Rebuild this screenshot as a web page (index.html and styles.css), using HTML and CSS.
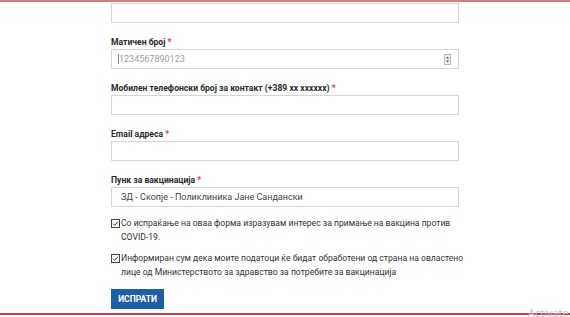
FILE: index.html
```html
<!DOCTYPE html>
<html lang="mk">
<head>
<meta charset="utf-8">
<link rel="stylesheet" href="styles.css">
</head>
<body>
<div class="topline"></div>
<form class="form">
  <div class="input"></div>
  <div class="field">
    <div class="label">Матичен број <span class="req">*</span></div>
    <div class="input number">
      <span class="caret"></span><span class="ph">1234567890123</span>
      <span class="spin">
        <svg width="7" height="11" viewBox="0 0 7 11"><rect x="0.5" y="0.5" width="6" height="10" fill="#eee" stroke="#bbb"/><path d="M2 4.5 L3.5 2.5 L5 4.5Z M2 6.5 L3.5 8.5 L5 6.5Z" fill="#555"/></svg>
      </span>
    </div>
  </div>
  <div class="field">
    <div class="label">Мобилен телефонски број за контакт (+389 xx xxxxxx) <span class="req">*</span></div>
    <div class="input"></div>
  </div>
  <div class="field">
    <div class="label">Email адреса <span class="req">*</span></div>
    <div class="input"></div>
  </div>
  <div class="field">
    <div class="label">Пунк за вакцинација <span class="req">*</span></div>
    <div class="input select">ЗД - Скопје - Поликлиника Јане Сандански</div>
  </div>
  <div class="check first">
    <span class="box"><svg width="9" height="9" viewBox="0 0 9 9"><rect x="0.5" y="0.5" width="8" height="8" fill="#fff" stroke="#444"/><path d="M2 4.6 L3.7 6.3 L7 2.6" fill="none" stroke="#333" stroke-width="1"/></svg></span>
    <span class="ctext">Со испраќање на оваа форма изразувам интерес за примање на вакцина против<br>COVID-19.</span>
  </div>
  <div class="check second">
    <span class="box"><svg width="9" height="9" viewBox="0 0 9 9"><rect x="0.5" y="0.5" width="8" height="8" fill="#fff" stroke="#444"/><path d="M2 4.6 L3.7 6.3 L7 2.6" fill="none" stroke="#333" stroke-width="1"/></svg></span>
    <span class="ctext">Информиран сум дека моите податоци ќе бидат обработени од страна на овластено<br>лице од Министерството за здравство за потребите за вакцинација</span>
  </div>
  <div class="btnrow"><span class="btn">ИСПРАТИ</span></div>
</form>
<div class="bottomline"></div>
<div class="watermark">Activate</div>
</body>
</html>
```
FILE: styles.css
```css
html, body {
  margin: 0;
  padding: 0;
  background: #fff;
  overflow: hidden;
}
body {
  width: 570px;
  height: 317px;
  position: relative;
  font-family: Roboto, "Liberation Sans", sans-serif;
  color: #333;
}
.topline {
  height: 2px;
  background: #c98184;
}
.form {
  width: 348px;
  margin: 1px 0 0 111px;
  display: flex;
  flex-direction: column;
}
.input {
  box-sizing: border-box;
  height: 20px;
  border: 1px solid #d6d6d6;
  background: #fff;
  display: flex;
  align-items: center;
  padding-left: 9px;
  font-size: 9px;
}
.field {
  margin-top: 12px;
  display: flex;
  flex-direction: column;
}
.label {
  font-size: 8.6px;
  font-weight: 700;
  line-height: 14px;
  color: #2b2b2b;
  white-space: nowrap;
}
.req {
  color: #d33;
}
.number {
  padding-left: 6px;
}
.caret {
  width: 1px;
  height: 10px;
  background: #888;
}
.ph {
  color: #a0a0a0;
}
.spin {
  margin-left: auto;
  margin-right: 7px;
  display: flex;
}
.select {
  color: #444;
}
.check {
  display: flex;
  align-items: flex-start;
  font-size: 8.6px;
  line-height: 14px;
  color: #333;
  white-space: nowrap;
}
.check.first {
  margin-top: 9px;
}
.check.second {
  margin-top: 7px;
}
.box {
  width: 10px;
  flex: none;
  padding-top: 3px;
  display: flex;
}
.btnrow {
  margin-top: 10px;
  display: flex;
}
.btn {
  width: 53px;
  height: 20px;
  background: #1f5fa6;
  color: #fff;
  font-size: 8.5px;
  font-weight: 700;
  display: flex;
  align-items: center;
  justify-content: center;
}
.bottomline {
  position: absolute;
  left: 0;
  right: 0;
  top: 313px;
  height: 2px;
  background: #c93a4b;
}
.watermark {
  position: absolute;
  z-index: 2;
  left: 528px;
  top: 305px;
  font-family: "Open Sans", "Liberation Sans", sans-serif;
  font-size: 11px;
  color: #c4c4c4;
  white-space: nowrap;
}
```
